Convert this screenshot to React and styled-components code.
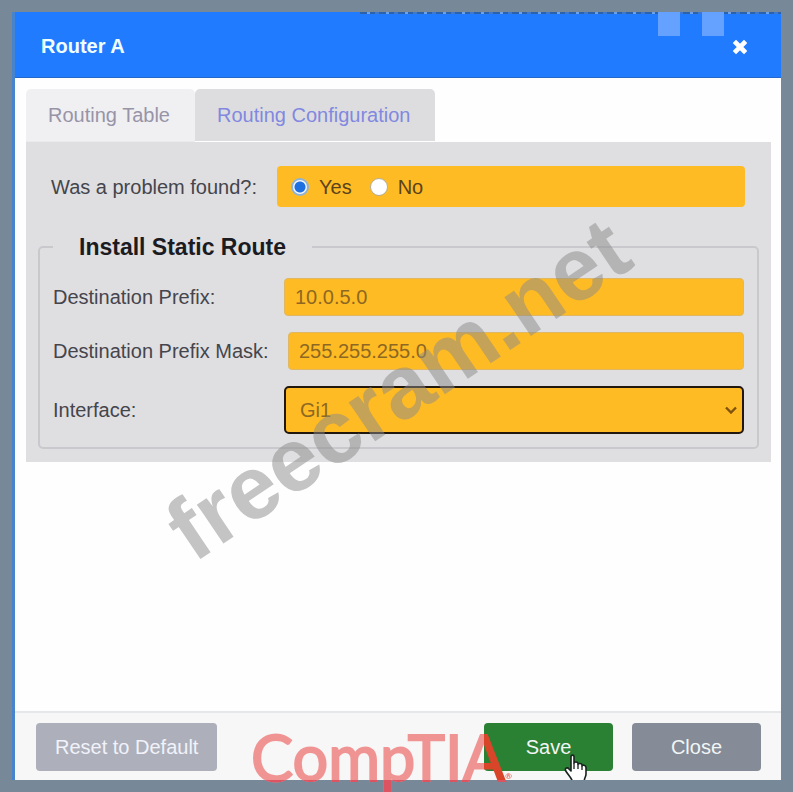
import React, { useState } from "react";
import styled, { createGlobalStyle } from "styled-components";

const App = () => {
  const [found, setFound] = useState("yes");
  const [prefix, setPrefix] = useState("10.0.5.0");
  const [mask, setMask] = useState("255.255.255.0");
  const [iface, setIface] = useState("Gi1");

  return (
    <Page>
      <GlobalStyle />
      <Modal>
        <Header>
          <BackgroundStrip />
          <Title>Router A</Title>
          <Marks aria-hidden="true">
            <Mark />
            <Mark />
          </Marks>
          <CloseIcon type="button" aria-label="Close dialog">
            <svg width="16" height="16" viewBox="0 0 16 16">
              <path
                d="M4 4 12 12M12 4 4 12"
                stroke="#fff"
                strokeWidth="4.6"
                strokeLinecap="square"
              />
            </svg>
          </CloseIcon>
        </Header>

        <Body>
          <Tabs role="tablist">
            <Tab type="button" role="tab" aria-selected="false">
              Routing Table
            </Tab>
            <Tab type="button" role="tab" aria-selected="true" $active>
              Routing Configuration
            </Tab>
          </Tabs>

          <Panel role="tabpanel">
            <ProblemRow role="radiogroup" aria-labelledby="problem">
              <Question id="problem">Was a problem found?:</Question>
              <Choices>
                <Choice>
                  <Radio
                    name="found"
                    checked={found === "yes"}
                    onChange={() => setFound("yes")}
                  />
                  Yes
                </Choice>
                <Choice>
                  <Radio
                    name="found"
                    checked={found === "no"}
                    onChange={() => setFound("no")}
                  />
                  No
                </Choice>
              </Choices>
            </ProblemRow>

            <Fieldset>
              <Legend>Install Static Route</Legend>
              <Rows>
                <Row>
                  <Label htmlFor="prefix">Destination Prefix:</Label>
                  <Input
                    id="prefix"
                    type="text"
                    value={prefix}
                    onChange={(e) => setPrefix(e.target.value)}
                  />
                </Row>
                <Row>
                  <Label htmlFor="mask" $wide>
                    Destination Prefix Mask:
                  </Label>
                  <Input
                    id="mask"
                    type="text"
                    value={mask}
                    onChange={(e) => setMask(e.target.value)}
                  />
                </Row>
                <Row>
                  <Label htmlFor="iface">Interface:</Label>
                  <SelectBox>
                    <Select
                      id="iface"
                      value={iface}
                      onChange={(e) => setIface(e.target.value)}
                    >
                      <option>Gi1</option>
                    </Select>
                    <Chevron width="12" height="8" viewBox="0 0 12 8">
                      <path
                        d="M1 1.5 6 6.5 11 1.5"
                        fill="none"
                        stroke="#80530c"
                        strokeWidth="2.4"
                      />
                    </Chevron>
                  </SelectBox>
                </Row>
              </Rows>
            </Fieldset>
          </Panel>
        </Body>

        <Footer>
          <Button type="button" $color="#adb0ba" $text="#f1f2fa">
            Reset to Default
          </Button>
          <Actions>
            <Button type="button" $color="#2a8134" $fixed>
              Save
            </Button>
            <Button type="button" $color="#858b97" $fixed>
              Close
            </Button>
          </Actions>
          <PointerClip>
            <Pointer width="25" height="30" viewBox="0 0 25 30">
              <path
                d="M7 2.5C7 .6 10 .6 10 2.5V9C10 7.500 14 7.500 14 9.500V10.500C14 9 18 9 18 11V12C18 10.500 22 11 22 13.500V20C22 23 20 24 20 29H9C8.500 25 4 21 1.500 16.500C.8 14 3.500 13 5 15L7 17Z"
                fill="#fff"
                stroke="#17231c"
                strokeWidth="1.6"
                strokeLinejoin="round"
              />
              <path d="M10 9V15M14 10.500V15M18 12V16" stroke="#17231c" strokeWidth="1.3" />
            </Pointer>
          </PointerClip>
        </Footer>
        <Watermark>freecram.net</Watermark>
        <Brand>
          CompTIA<Registered>®</Registered>
        </Brand>
      </Modal>
    </Page>
  );
};

export default App;

const GlobalStyle = createGlobalStyle`
  * {
    box-sizing: border-box;
  }
  body {
    margin: 0;
    background: #778899;
    overflow: hidden;
  }
  body, button, input, select {
    font-family: "Liberation Sans", Arial, sans-serif;
    font-size: 20px;
    line-height: 24px;
  }
`;

const Page = styled.div`
  display: flex;
  min-height: 100vh;
  padding: 12px;
`;

const Modal = styled.main`
  position: relative;
  flex: 1;
  display: flex;
  flex-direction: column;
  min-width: 0;
  background: #fefefe;
  border-left: 3px solid #4884cd;
`;

const Header = styled.header`
  position: relative;
  display: flex;
  align-items: center;
  justify-content: space-between;
  height: 66px;
  padding: 2px 33px 0 26px;
  background: #217bff;
  border-bottom: 1px solid #2468cc;
`;

/* sliver of the page behind the dialog */
const BackgroundStrip = styled.div`
  position: absolute;
  top: 0;
  left: 45%;
  right: 0;
  height: 2px;
  background: repeating-linear-gradient(
    90deg,
    #2c62ab 0 7px,
    #6ca2ed 7px 10px,
    #2c62ab 10px 15px,
    #3c79d2 15px 19px
  );
`;

const Title = styled.h1`
  margin: 0;
  font-size: 20px;
  line-height: 24px;
  color: #f0ffff;
`;

const Marks = styled.div`
  position: absolute;
  top: 0;
  right: 57px;
  display: flex;
  gap: 22px;
`;

const Mark = styled.span`
  width: 22px;
  height: 24px;
  background: #65a2ff;
`;

const CloseIcon = styled.button`
  display: flex;
  padding: 2px 0 0;
  border: none;
  background: none;
  cursor: pointer;
`;

const Body = styled.section`
  flex: 1;
  padding: 11px 10px 0 11px;
`;

const Tabs = styled.div`
  display: flex;
`;

const Tab = styled.button`
  height: 53px;
  padding: 0 25px 0 22px;
  border: none;
  border-bottom: 1px solid ${({ $active }) => ($active ? "#fff" : "#ebeaee")};
  border-radius: 5px 5px 0 0;
  background: ${({ $active }) => ($active ? "#dddde0" : "#f0eff2")};
  color: ${({ $active }) => ($active ? "#8188df" : "#9794a8")};
`;

const Panel = styled.div`
  padding: 24px 12px 13px;
  background: #dfdee1;
  color: #45454c;
`;

const ProblemRow = styled.div`
  display: flex;
  align-items: center;
  padding: 0 14px 0 13px;
`;

const Question = styled.span`
  flex: 0 0 226px;
`;

const Choices = styled.div`
  flex: 1;
  display: flex;
  align-items: center;
  gap: 18px;
  height: 41px;
  padding: 0 14px;
  border-radius: 4px;
  background: #ffbb24;
`;

const Choice = styled.label`
  display: flex;
  align-items: center;
  gap: 10px;
  color: #59431d;
`;

const Radio = styled.input.attrs({ type: "radio" })`
  appearance: none;
  width: 18px;
  height: 18px;
  margin: 0;
  border: 1px solid #b5ab91;
  border-radius: 50%;
  background: #fff;

  &:checked {
    border: 2px solid #8fb3d6;
    background: radial-gradient(circle, #1e6fe0 0 5px, #f4f8ff 6px);
  }
`;

const Fieldset = styled.fieldset`
  min-width: 0;
  margin: 26px 0 0;
  padding: 0 13px 13px;
  border: 2px solid #c9c8cd;
  border-radius: 5px;
`;

const Legend = styled.legend`
  padding: 0 26px;
  font-size: 23px;
  line-height: 28px;
  font-weight: bold;
  color: #1b1b22;
`;

const Rows = styled.div`
  display: flex;
  flex-direction: column;
  gap: 16px;
  padding-top: 17px;
`;

const Row = styled.div`
  display: flex;
  align-items: center;
`;

const Label = styled.label`
  flex: 0 0 ${({ $wide }) => ($wide ? 235 : 231)}px;
`;

const Input = styled.input`
  flex: 1;
  min-width: 0;
  height: 38px;
  padding: 0 10px;
  border: 1px solid #dfb765;
  border-radius: 4px;
  background: #ffbb24;
  color: #8d6822;
`;

const SelectBox = styled.div`
  position: relative;
  flex: 1;
  display: flex;
`;

const Select = styled.select`
  appearance: none;
  flex: 1;
  height: 48px;
  padding: 0 14px;
  border: 2px solid #21170c;
  border-radius: 5px;
  outline: none;
  background: #ffbb24;
  color: #8d6822;
`;

const Chevron = styled.svg`
  position: absolute;
  right: 7px;
  top: 20px;
  pointer-events: none;
`;

const Footer = styled.footer`
  position: relative;
  display: flex;
  justify-content: space-between;
  padding: 10px 20px 9px 21px;
  border-top: 2px solid #e6e7e8;
  background: #f7f7f7;
`;

const Actions = styled.div`
  display: flex;
  gap: 19px;
`;

const Button = styled.button`
  width: ${({ $fixed }) => ($fixed ? "129px" : "auto")};
  height: 48px;
  padding: 0 19px;
  border: none;
  border-radius: 4px;
  background: ${({ $color }) => $color};
  color: ${({ $text }) => $text || "#f2f5f5"};
  cursor: pointer;
`;

const PointerClip = styled.div`
  position: absolute;
  right: 192px;
  bottom: 0;
  height: 26px;
  overflow: hidden;
  pointer-events: none;
`;

const Pointer = styled.svg`
  display: block;
`;

const Watermark = styled.div`
  position: absolute;
  top: 377px;
  left: 50%;
  font-size: 89px;
  line-height: 1;
  font-weight: bold;
  color: rgba(138, 138, 138, 0.5);
  transform: translate(-50%, -50%) rotate(-34deg);
  pointer-events: none;
`;

/* the tint gets stronger over the green button and below the dialog */
const Brand = styled.div`
  position: absolute;
  left: 236px;
  bottom: -12px;
  display: flex;
  align-items: flex-end;
  font-family: Lato, sans-serif;
  font-size: 63px;
  line-height: 70px;
  color: transparent;
  background: linear-gradient(#dc5361, #dc5361) 0 100% / 100% 12px no-repeat,
    linear-gradient(90deg, #f09493 233px, #d94529 233px);
  background-clip: text;
  -webkit-text-stroke: 2px transparent;
  pointer-events: none;
`;

const Registered = styled.span`
  font-size: 8px;
  line-height: 32px;
  color: #f09493;
  -webkit-text-stroke: 0;
`;
